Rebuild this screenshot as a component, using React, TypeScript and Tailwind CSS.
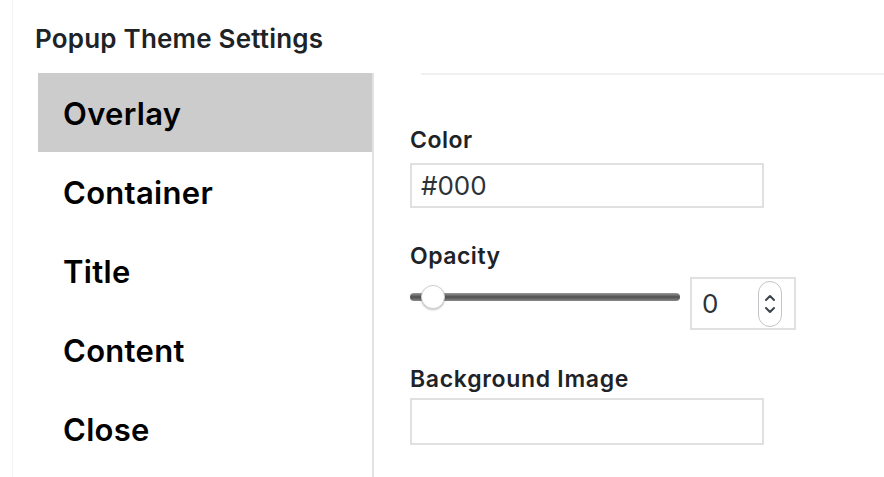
import { useState } from 'react';

const tabs = ['Overlay', 'Container', 'Title', 'Content', 'Close'];

function Spinner() {
  return (
    <div className="flex h-[46px] w-[24px] flex-col items-center justify-center rounded-full border border-[#c3c4c7] bg-white">
      <svg width="14" height="12" viewBox="0 0 14 12" fill="none" stroke="#3c434a" strokeWidth="2" strokeLinecap="round" strokeLinejoin="round">
        <path d="M3 8 L7 4 L11 8" />
      </svg>
      <svg width="14" height="12" viewBox="0 0 14 12" fill="none" stroke="#3c434a" strokeWidth="2" strokeLinecap="round" strokeLinejoin="round">
        <path d="M3 4 L7 8 L11 4" />
      </svg>
    </div>
  );
}

function Slider() {
  return (
    <div className="relative h-[24px] w-[270px]">
      <div className="absolute left-0 right-0 top-[8px] h-[8px] rounded-full bg-gradient-to-b from-[#9a9a9a] via-[#4f4f4f] to-[#8a8a8a]" />
      <div className="absolute left-[11px] top-0 h-[24px] w-[24px] rounded-full border border-[#d0d0d0] bg-white shadow-[0_1px_2px_rgba(0,0,0,0.25)]" />
    </div>
  );
}

export default function App() {
  const [active, setActive] = useState('Overlay');

  return (
    <div className="h-[477px] w-[884px] overflow-hidden bg-white font-['Inter',sans-serif] text-[#1d2327]">
      <div className="ml-[12px] h-full border-l border-[#f4f4f4] pt-[22px]">
        <h2 className="ml-[22px] text-[26px] font-semibold leading-[34px] tracking-[0.2px] text-[#1d2327]">Popup Theme Settings</h2>
        <div className="mt-[17px] flex">
          <ul className="ml-[25px] w-[336px] border-r-2 border-[#e2e2e2] pb-[40px]">
            {tabs.map((t) => (
              <li
                key={t}
                onClick={() => setActive(t)}
                className={`flex h-[79px] cursor-pointer items-center pl-[25px] pt-[4px] text-[31px] font-semibold tracking-[0.3px] text-black ${
                  active === t ? 'bg-[#cccccc]' : ''
                }`}
              >
                {t}
              </li>
            ))}
          </ul>
          <div className="flex-1">
            <div className="ml-[47px] h-[2px] bg-[#f0f0f0]" />
            <div className="ml-[36px] pt-[50px]">
              <label className="block text-[23px] font-semibold leading-[30px] tracking-[0.5px] text-[#1d2327]">Color</label>
              <div className="mt-[8px] flex h-[45px] w-[354px] items-center border-2 border-[#e0e0e0] px-[9px] text-[26px] text-[#2c3338]">
                #000
              </div>
              <label className="mt-[33px] block text-[23px] font-semibold leading-[30px] tracking-[0.5px] text-[#1d2327]">Opacity</label>
              <div className="mt-[6px] flex items-start">
                <div className="mt-[8px]">
                  <Slider />
                </div>
                <div className="ml-[10px] flex h-[53px] w-[106px] items-center justify-between border-2 border-[#e0e0e0] pl-[10px] pr-[12px] text-[26px] text-[#2c3338]">
                  <span>0</span>
                  <Spinner />
                </div>
              </div>
              <label className="mt-[34px] block text-[23px] font-semibold leading-[30px] tracking-[0.7px] text-[#1d2327]">Background Image</label>
              <div className="mt-[4px] h-[47px] w-[354px] border-2 border-[#e0e0e0]" />
            </div>
          </div>
        </div>
      </div>
    </div>
  );
}
